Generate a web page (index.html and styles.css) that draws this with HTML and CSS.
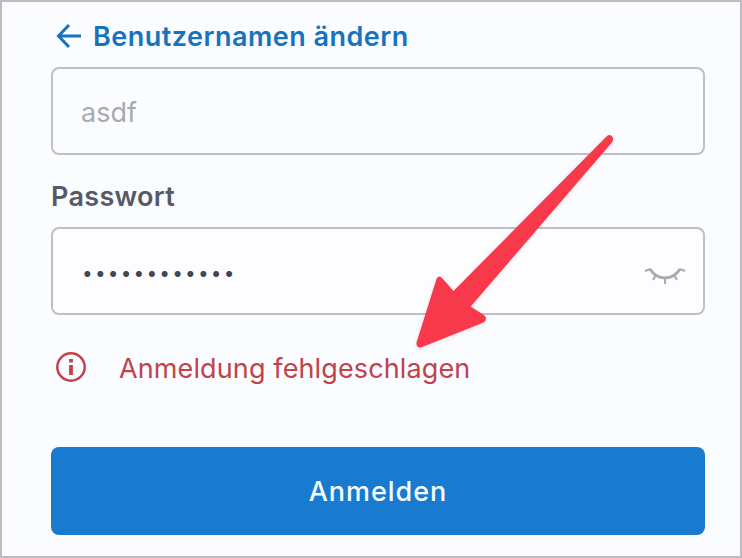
FILE: index.html
```html
<!DOCTYPE html>
<html lang="de">
<head>
<meta charset="utf-8">
<title>Anmelden</title>
<link rel="stylesheet" href="styles.css">
</head>
<body>
<main class="panel">
  <a class="back">
    <svg class="back-icon" viewBox="0 0 26 26" fill="none" stroke="currentColor" stroke-width="3"><path d="M25 13H2.5M13 2L2.5 13L13 24"/></svg>
    <span class="back-label">Benutzernamen ändern</span>
  </a>
  <div class="field field-user"><span class="user">asdf</span></div>
  <div class="label">Passwort</div>
  <div class="field field-password">
    <span class="dots">••••••••••••</span>
    <svg class="eye" viewBox="0 0 42 18" fill="none" stroke="currentColor"><path stroke-width="2.9" d="M6 2C13.500 14 28.500 14 36 2"/><path stroke-width="2.1" d="M1 4L6.500 2M41 4L35.500 2M11.300 9L9 13M21 11V17M30.700 9L33 13"/></svg>
  </div>
  <div class="error">
    <svg class="info" viewBox="0 0 30 30" fill="none" stroke="currentColor"><circle cx="15" cy="15" r="13.700" stroke-width="2.500"/><path stroke-width="3.800" d="M15 7V10.500M15 13V23"/></svg>
    <span class="error-text">Anmeldung fehlgeschlagen</span>
  </div>
  <button class="submit"><span class="submit-text">Anmelden</span></button>
  <svg class="pointer" viewBox="0 0 240 240"><path d="M206.500 16.500Q210 13.500 212.500 17Q214 20 211.500 23L70.700 186.500L84.500 195.500Q88 199.500 83.500 202.500L21 227.500Q16 228 16.500 222.500L36.500 159Q39 154.500 42.500 158.500L53.500 171Z"/></svg>
</main>
</body>
</html>
```
FILE: styles.css
```css
* { box-sizing: border-box; }
body {
  margin: 0;
  font-family: Inter, "Liberation Sans", sans-serif;
  font-size: 27px;
}
.panel {
  position: relative;
  display: flex;
  flex-direction: column;
  width: 742px;
  height: 558px;
  padding: 15px 35px 0 49px;
  background: #fbfcff;
  border: 2px solid #bcbcc1;
  overflow: hidden;
}
.back {
  display: flex;
  align-items: center;
  height: 40px;
  margin-bottom: 10px;
  color: #1773bd;
  font-weight: 600;
  letter-spacing: .48px;
}
.back-icon { width: 26px; height: 26px; margin: 0 11px 2px 5px; }
.back-label { padding-bottom: 2px; }
.field {
  display: flex;
  align-items: center;
  flex: none;
  height: 88px;
  padding: 0 17px 0 28px;
  border: 2px solid #bfc0c5;
  border-radius: 8px;
}
.field-password { background: #fdfdff; }
.user { color: #a9aab1; padding-top: 2px; }
.label {
  height: 72px;
  line-height: 84px;
  color: #555a66;
  font-weight: 600;
  letter-spacing: .3px;
}
.dots {
  padding: 5px 0 0 1px;
  color: #424754;
  font-size: 19px;
  line-height: 40px;
  letter-spacing: 2.2px;
}
.eye { width: 42px; height: 18px; margin: 9px 0 0 auto; color: #a9aab0; }
.error {
  display: flex;
  align-items: center;
  height: 40px;
  margin: 33px 0 59px;
  color: #c0434a;
  letter-spacing: .12px;
}
.info { width: 30px; height: 30px; margin: 0 33px 2px 5px; }
.submit {
  height: 88px;
  flex: none;
  border: 0;
  border-radius: 8px;
  background: #187bcf;
  color: #f4fcff;
  font: 500 27px Inter, "Liberation Sans", sans-serif;
  letter-spacing: .95px;
}
.pointer {
  position: absolute;
  left: 398px;
  top: 118px;
  width: 240px;
  height: 240px;
  fill: #f7394b;
  filter: drop-shadow(0 1px 2px rgba(60, 60, 90, .15));
}
```
